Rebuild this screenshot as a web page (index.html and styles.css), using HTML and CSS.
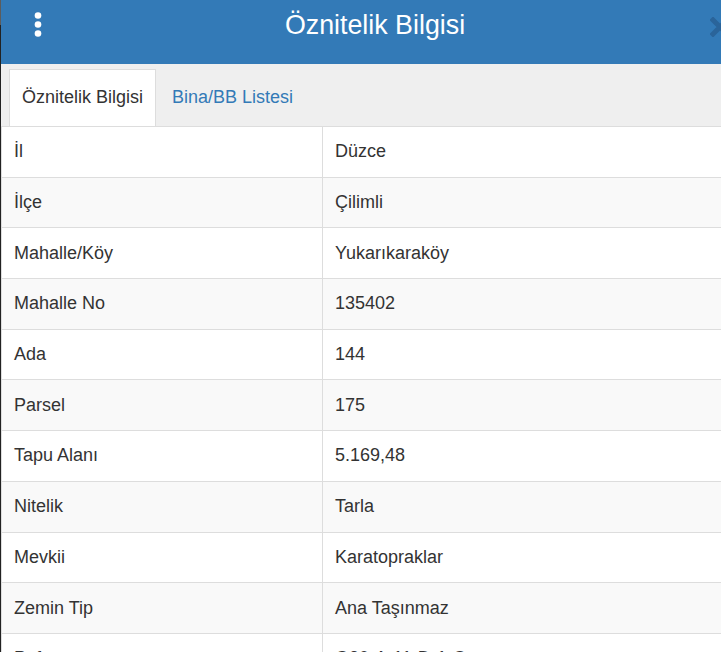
FILE: index.html
```html
<!DOCTYPE html>
<html lang="tr">
<head>
<meta charset="utf-8">
<title>Öznitelik Bilgisi</title>
<link rel="stylesheet" href="styles.css">
</head>
<body>
<div class="panel">
  <header class="panel-header">
    <div class="header-left">
      <button class="menu-btn" aria-label="Menü">
        <svg width="8" height="26" viewBox="0 0 8 26">
          <circle cx="4" cy="3.5" r="3.3" fill="#fff"/>
          <circle cx="4" cy="12.5" r="3.3" fill="#fff"/>
          <circle cx="4" cy="21.5" r="3.3" fill="#fff"/>
        </svg>
      </button>
    </div>
    <h1 class="panel-title">Öznitelik Bilgisi</h1>
    <div class="header-right">
      <button class="close-btn" aria-label="Kapat">
        <svg width="20" height="20" viewBox="0 0 20 20">
          <path d="M3 3 L17 17 M17 3 L3 17" stroke="#2a649a" stroke-width="5" stroke-linecap="square"/>
        </svg>
      </button>
    </div>
  </header>
  <nav class="tabs">
    <a class="tab active">Öznitelik Bilgisi</a>
    <a class="tab">Bina/BB Listesi</a>
  </nav>
  <div class="attr-table">
    <div class="row"><div class="cell key">İl</div><div class="cell val">Düzce</div></div>
    <div class="row striped"><div class="cell key">İlçe</div><div class="cell val">Çilimli</div></div>
    <div class="row"><div class="cell key">Mahalle/Köy</div><div class="cell val">Yukarıkaraköy</div></div>
    <div class="row striped"><div class="cell key">Mahalle No</div><div class="cell val">135402</div></div>
    <div class="row"><div class="cell key">Ada</div><div class="cell val">144</div></div>
    <div class="row striped"><div class="cell key">Parsel</div><div class="cell val">175</div></div>
    <div class="row"><div class="cell key">Tapu Alanı</div><div class="cell val">5.169,48</div></div>
    <div class="row striped"><div class="cell key">Nitelik</div><div class="cell val">Tarla</div></div>
    <div class="row"><div class="cell key">Mevkii</div><div class="cell val">Karatopraklar</div></div>
    <div class="row striped"><div class="cell key">Zemin Tip</div><div class="cell val">Ana Taşınmaz</div></div>
    <div class="row"><div class="cell key">Pafta</div><div class="cell val">G30-A-11-D-1-C</div></div>
  </div>
</div>
</body>
</html>
```
FILE: styles.css
```css
html, body {
  margin: 0;
  padding: 0;
  height: 100%;
}
body {
  overflow: hidden;
  background: linear-gradient(#5c5c5c 0, #5c5c5c 25px, #222 25px);
  font-family: "Liberation Sans", Arial, Helvetica, sans-serif;
  color: #333;
}
.panel {
  margin-left: 1px;
  width: 748px;
  min-height: 100%;
  background: #fff;
}
.panel-header {
  height: 64px;
  background: #337ab7;
  display: grid;
  grid-template-columns: 1fr auto 1fr;
  align-items: start;
}
.header-left {
  padding: 12px 0 0 33px;
}
.menu-btn, .close-btn {
  border: 0;
  background: none;
  padding: 0;
  margin: 0;
  display: block;
  cursor: pointer;
}
.menu-btn svg, .close-btn svg {
  display: block;
}
.panel-title {
  margin: 0;
  padding-top: 10px;
  font-size: 26.8px;
  line-height: 30px;
  font-weight: normal;
  color: #fff;
  white-space: nowrap;
}
.header-right {
  display: flex;
  justify-content: flex-end;
  padding: 17px 19px 0 0;
}
.tabs {
  height: 62px;
  background: #efefef;
  display: flex;
  align-items: flex-end;
  padding-left: 8px;
  box-sizing: border-box;
}
.tab {
  height: 57px;
  box-sizing: border-box;
  display: flex;
  align-items: center;
  padding: 0 12px 2px 12px;
  border: 1px solid transparent;
  border-bottom: 0;
  font-size: 18px;
  color: #337ab7;
  text-decoration: none;
  cursor: pointer;
}
.tab + .tab {
  margin-left: 3px;
}
.tab.active {
  background: #fff;
  border-color: #ddd;
  color: #333;
}
.attr-table {
  border-left: 1px solid #ddd;
  font-size: 18px;
}
.row {
  display: grid;
  grid-template-columns: 321px 1fr;
  height: 50.7px;
  box-sizing: border-box;
  border-top: 1px solid #ddd;
}
.row.striped {
  background: #f9f9f9;
}
.cell {
  display: flex;
  align-items: center;
  padding: 0 12px;
  box-sizing: border-box;
  white-space: nowrap;
}
.cell.key {
  border-right: 1px solid #ddd;
}
```
